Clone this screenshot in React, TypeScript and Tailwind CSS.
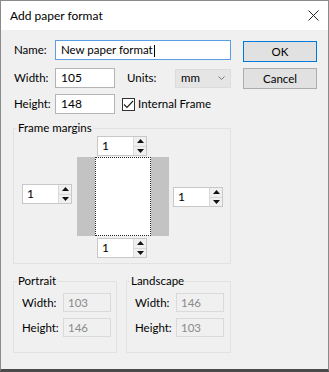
import React from 'react';

const font = { fontFamily: 'Lato, "Noto Sans", sans-serif' };

const Spinner: React.FC<{ value: string; className?: string }> = ({ value, className = '' }) => (
  <div className={`flex h-[20px] w-[50px] border border-[#c8c8c8] bg-white ${className}`}>
    <div className="flex-1 pl-[4px] text-[12px] leading-[18px] text-black">{value}</div>
    <div className="flex w-[13px] flex-col border-l border-[#d9d9d9] bg-[#f0f0f0]">
      <div className="flex flex-1 items-center justify-center border-b border-[#d9d9d9]">
        <svg width="7" height="4" viewBox="0 0 7 4"><path d="M0 4 L3.5 0 L7 4 Z" fill="#111" /></svg>
      </div>
      <div className="flex flex-1 items-center justify-center">
        <svg width="7" height="4" viewBox="0 0 7 4"><path d="M0 0 L3.5 4 L7 0 Z" fill="#111" /></svg>
      </div>
    </div>
  </div>
);

const TextBox: React.FC<{ value: string; className?: string }> = ({ value, className = '' }) => (
  <div className={`h-[20px] border border-[#b4b4b4] bg-white pl-[5px] text-[12px] leading-[18px] ${className}`}>
    {value}
  </div>
);

const ReadOnly: React.FC<{ value: string }> = ({ value }) => (
  <div className="h-[19px] w-[48px] border border-[#dadada] bg-[#f0f0f0] pl-[4px] text-[11.5px] leading-[17px] text-[#8a8a8a]">
    {value}
  </div>
);

const SizeBox: React.FC<{ title: string; width: string; height: string; className?: string }> = ({ title, width, height, className = '' }) => (
  <fieldset className={`border border-[#e2e2e2] pb-[15px] ${className}`}>
    <legend className="ml-[3px] px-[1px] text-[11.5px] leading-[16px]">{title}</legend>
    <div className="mt-[4px] flex items-center pl-[8px]">
      <span className="w-[41px] text-[11.5px]">Width:</span>
      <ReadOnly value={width} />
    </div>
    <div className="mt-[6px] flex items-center pl-[8px]">
      <span className="w-[41px] text-[11.5px]">Height:</span>
      <ReadOnly value={height} />
    </div>
  </fieldset>
);

export default function App() {
  return (
    <div style={font} className="flex h-[372px] w-[329px] flex-col border border-b-[3px] border-[#8a8a8a] border-b-[#4a4a4a] bg-[#f0f0f0] text-black">
      {/* title bar */}
      <div className="flex h-[29px] items-center justify-between bg-white pl-[9px] pr-[9px]">
        <span className="text-[12px]">Add paper format</span>
        <svg width="11" height="11" viewBox="0 0 11 11">
          <path d="M0.5 0.5 L10.5 10.5 M10.5 0.5 L0.5 10.5" stroke="#222" strokeWidth="1" />
        </svg>
      </div>

      <div className="flex flex-1 gap-[12px] pl-[12px] pt-[10px]">
        {/* left column */}
        <div className="flex w-[218px] flex-col">
          <div className="flex h-[20px] items-center">
            <span className="w-[42px] pl-[1px] text-[11.5px]">Name:</span>
            <div className="h-[20px] w-[176px] border border-[#5c9ee4] bg-white pl-[5px] text-[11.5px] leading-[18px]">
              New paper format<span className="ml-[1px] inline-block h-[12px] w-px bg-black align-middle" />
            </div>
          </div>

          <div className="mt-[8px] flex h-[20px] items-center">
            <span className="w-[42px] pl-[1px] text-[11.5px]">Width:</span>
            <TextBox value="105" className="w-[60px]" />
            <span className="ml-[12px] w-[48px] text-[11.5px]">Units:</span>
            <div className="flex h-[19px] w-[56px] items-center justify-between border border-[#dcdcdc] bg-[#e5e5e5] pl-[5px] pr-[5px] text-[11.5px]">
              <span>mm</span>
              <svg width="7" height="4" viewBox="0 0 7 4"><path d="M0.5 0.5 L3.5 3.5 L6.5 0.5" stroke="#777" fill="none" /></svg>
            </div>
          </div>

          <div className="mt-[6px] flex h-[20px] items-center">
            <span className="w-[42px] pl-[1px] text-[11.5px]">Height:</span>
            <TextBox value="148" className="w-[60px]" />
            <div className="ml-[7px] flex h-[13px] w-[13px] items-center justify-center border border-[#333] bg-white">
              <svg width="11" height="9" viewBox="0 0 11 9"><path d="M1 4.5 L4 7.5 L10 1" stroke="#222" strokeWidth="1.2" fill="none" /></svg>
            </div>
            <span className="ml-[3px] text-[11.5px]">Internal Frame</span>
          </div>

          <fieldset className="mt-[6px] border border-[#e2e2e2] pb-[5px]">
            <legend className="ml-[3px] px-[1px] text-[11.5px] leading-[16px]">Frame margins</legend>
            <Spinner value="1" className="ml-[83px]" />
            <div className="mt-px flex h-[79px]">
              <Spinner value="1" className="ml-[8px] mt-[27px]" />
              <div className="ml-[5px] flex w-[92px] justify-center bg-[#c3c3c3]">
                <div className="w-[56px] border border-dotted border-[#222] bg-white" />
              </div>
              <Spinner value="1" className="ml-[4px] mt-[30px]" />
            </div>
            <Spinner value="1" className="ml-[83px] mt-[2px]" />
          </fieldset>

          <div className="mt-[9px] flex gap-[9px]">
            <SizeBox title="Portrait" width="103" height="146" className="w-[104px]" />
            <SizeBox title="Landscape" width="146" height="103" className="w-[105px]" />
          </div>
        </div>

        {/* buttons */}
        <div className="flex flex-col gap-[6px] pt-px">
          <button className="h-[21px] w-[74px] border border-[#0078d7] bg-[#e1e1e1] text-[11.5px]">OK</button>
          <button className="h-[21px] w-[74px] border border-[#adadad] bg-[#e1e1e1] text-[11.5px]">Cancel</button>
        </div>
      </div>
    </div>
  );
}
